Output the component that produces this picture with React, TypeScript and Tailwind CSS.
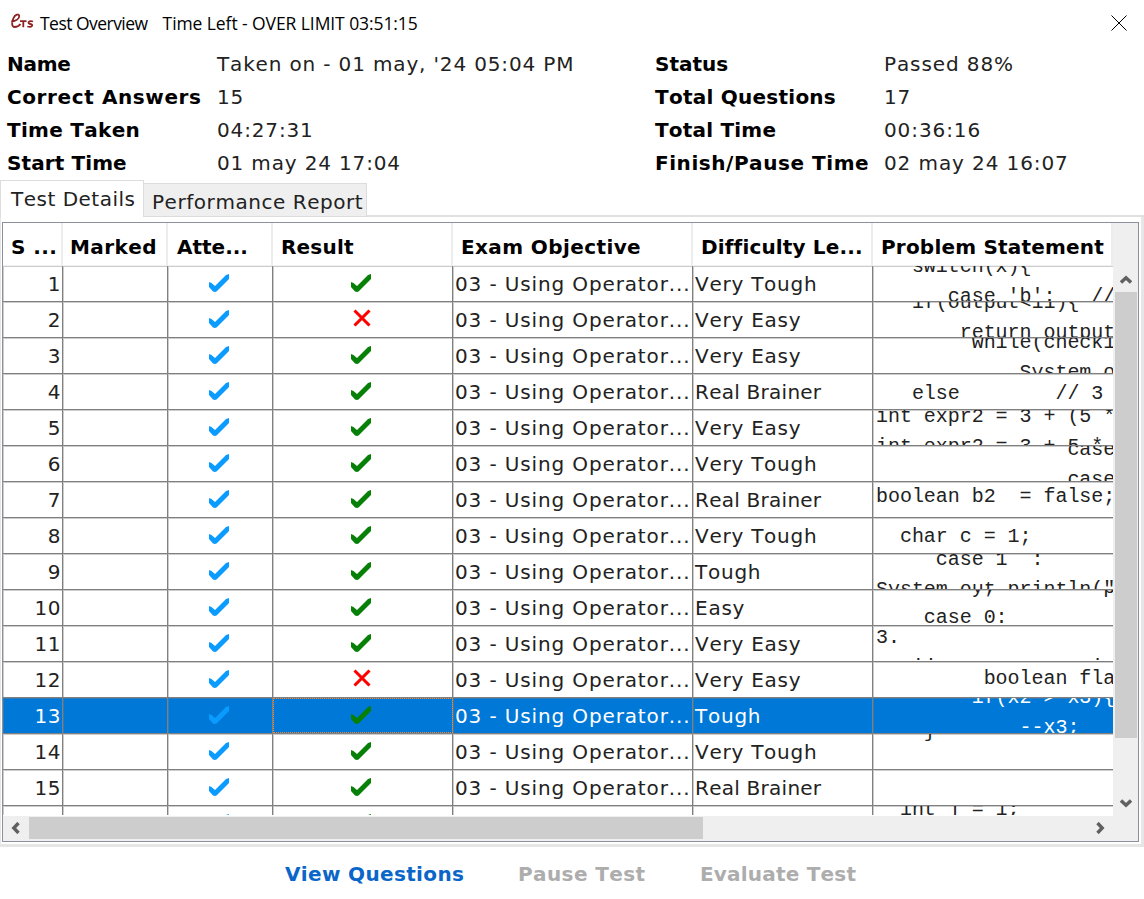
import React from "react";

type Row = { code: string; offset: string; level: string; failed?: boolean };

const rows: Row[] = [
  { level: "Very Tough", offset: "-mt-[14px]", code: "   switch(x){\n      case 'b':   //" },
  { level: "Very Easy", offset: "-mt-[14px]", code: "   if(output<11){\n       return output", failed: true },
  { level: "Very Easy", offset: "-mt-[10px]", code: "        while(check1\n            System.o" },
  { level: "Real Brainer", offset: "mt-[5px]", code: "   else        // 3" },
  { level: "Very Easy", offset: "-mt-[8px]", code: "int expr2 = 3 + (5 *\nint expr2 = 3 + 5 * " },
  { level: "Very Tough", offset: "-mt-[11px]", code: "                case\n                case" },
  { level: "Real Brainer", offset: "mt-0", code: "boolean b2  = false;" },
  { level: "Very Tough", offset: "mt-[4px]", code: "  char c = 1;" },
  { level: "Tough", offset: "-mt-[9px]", code: "     case 1  :\nSystem.out.println(\"" },
  { level: "Easy", offset: "-mt-[17px]", code: "        y;         p\n    case 0:" },
  { level: "Very Easy", offset: "-mt-[3px]", code: "3.\n   ij             i" },
  { level: "Very Easy", offset: "mt-[2px]", code: "         boolean fla", failed: true },
  { level: "Tough", offset: "-mt-[15px]", code: "        if(x2 > x3){\n            --x3;" },
  { level: "Very Tough", offset: "-mt-[17px]", code: "    }" },
  { level: "Real Brainer", offset: "mt-0", code: "" },
  { level: "", offset: "-mt-[11px]", code: "  int j = 1;" },
];

const Check = ({ className }: { className: string }) => (
  <svg width="20" height="19" viewBox="0 0 20 19" className={className}>
    <path d="M0 8 2.5 9 6 12 17 1 20 0V5L7.5 17.5 6 18 4 17.5 0 13Z" fill="currentColor" />
  </svg>
);

const Cross = () => (
  <svg width="18" height="18" viewBox="0 0 18 18" className="-ml-[2px] mt-[7px] text-[#f00]">
    <path d="M1.500 1.500 16.500 16.500M16.500 1.500 1.500 16.500" stroke="currentColor" strokeWidth="3.1" />
  </svg>
);

const Chevron = ({ turn }: { turn: string }) => (
  <svg width="12" height="10" viewBox="0 0 12 10" className={turn}>
    <path d="M1 7.5 6 2.8 11 7.5" fill="none" stroke="#606060" strokeWidth="3.4" />
  </svg>
);

const columns = "grid grid-cols-[60px_105px_105px_180px_240px_180px_240px]";

const headers = [
  { label: "S ...", pad: "pl-[8px]", track: "tracking-[0.4px]" },
  { label: "Marked", pad: "pl-[7px]", track: "tracking-[0.4px]" },
  { label: "Atte...", pad: "pl-[9px]", track: "tracking-[0px]" },
  { label: "Result", pad: "pl-[8px]", track: "tracking-[0.2px]" },
  { label: "Exam Objective", pad: "pl-[8px]", track: "tracking-[0.4px]" },
  { label: "Difficulty Le...", pad: "pl-[8px]", track: "tracking-[0.15px]" },
  { label: "Problem Statement", pad: "pl-[8px]", track: "tracking-[0.2px]" },
];

const info = [
  { label: "Name", track: "tracking-[-0.3px]", value: "Taken on - 01 may, '24 05:04 PM", label2: "Status", track2: "tracking-[0px]", value2: "Passed 88%" },
  { label: "Correct Answers", track: "tracking-[0.6px]", value: "15", label2: "Total Questions", track2: "tracking-[0.25px]", value2: "17" },
  { label: "Time Taken", track: "tracking-[0.3px]", value: "04:27:31", label2: "Total Time", track2: "tracking-[0.2px]", value2: "00:36:16" },
  { label: "Start Time", track: "tracking-[0.1px]", value: "01 may 24 17:04", label2: "Finish/Pause Time", track2: "tracking-[0.55px]", value2: "02 may 24 16:07" },
];

function TableRow({ row, index }: { row: Row; index: number }) {
  const selected = index === 12;
  const last = index === 15;
  const cell = "h-full overflow-hidden border-r border-[#808080] shadow-[inset_1px_1px_0_rgba(128,128,128,0.4)]";
  const levelTrack = row.level === "Real Brainer" ? "tracking-[0.25px]" : "tracking-[0.75px]";
  return (
    <div
      className={`${columns} shrink-0 overflow-hidden ${last ? "h-[9px]" : "h-9 border-b border-[#808080]"} ${
        selected ? "bg-[#0078d7] text-white" : "bg-white text-[#222]"
      }`}
    >
      <div className={`${cell} pr-px text-right leading-[37px] tracking-[0.5px]`}>{last ? "" : index + 1}</div>
      <div className={cell} />
      <div className={`${cell} flex justify-center`}>
        <Check className="-ml-[3px] mt-[8px] shrink-0 text-[#0a9bff]" />
      </div>
      <div
        className={`${cell} flex justify-center ${selected ? "outline outline-1 -outline-offset-1 outline-dotted outline-[#ff8728]" : ""}`}
      >
        {row.failed ? <Cross /> : <Check className="-ml-[3px] mt-[8px] shrink-0 text-[#078007]" />}
      </div>
      <div className={`${cell} whitespace-nowrap pl-[2px] leading-[37px] tracking-[0.87px]`}>
        {last ? "" : "03 - Using Operator..."}
      </div>
      <div className={`${cell} ${levelTrack} whitespace-nowrap pl-[2px] leading-[37px]`}>{row.level}</div>
      <pre className="h-full overflow-hidden pl-[3px] font-['Liberation_Mono',monospace] text-[20px] leading-[30px] tracking-[-0.04px] shadow-[inset_1px_1px_0_rgba(128,128,128,0.4)]">
        <div className={row.offset}>{row.code}</div>
      </pre>
    </div>
  );
}

export default function App() {
  return (
    <div className="flex h-[899px] w-[1144px] flex-col overflow-hidden bg-white font-['DejaVu_Sans',sans-serif] text-[20px] text-[#222] [font-kerning:none]">
      <header className="flex h-[47px] shrink-0 items-center pl-[10px] pr-[17px] font-['Open_Sans',sans-serif] text-[17.5px] text-black [font-kerning:normal]">
        <svg width="24" height="18" viewBox="0 0 24 18" className="-mt-[3px] shrink-0" fill="none" stroke="#8f2020" strokeWidth="1.8">
          <path d="M1.200 8.500C6 7.800 9.500 5.500 9.200 2.800 8.800.6 5 1.200 3.300 5.500 1.300 10.500 2 14 4.500 14 6.500 14 9 13 10.500 11" />
          <path d="M10 8.200H16.500M13.300 8.200V14.200M23 8.500C18.500 7 17 10.500 20.300 11 24 11.600 22 15 17.300 13.500" />
        </svg>
        <span className="ml-[6px] tracking-[-0.53px]">Test Overview</span>
        <span className="ml-[15px] tracking-[-0.08px]">Time Left - OVER LIMIT 03:51:15</span>
        <svg width="16" height="16" viewBox="0 0 16 16" className="-mt-[2px] ml-auto" stroke="#000" strokeWidth="1">
          <path d="M.5.5 15.500 15.500M15.500.5.5 15.500" />
        </svg>
      </header>

      <section className="flex h-[133px] shrink-0 flex-col pl-[7px]">
        {info.map((r) => (
          <div key={r.label} className="grid h-[33px] shrink-0 grid-cols-[210px_438px_229px_auto] whitespace-nowrap leading-[34px]">
            <b className={`${r.track} text-black`}>{r.label}</b>
            <span className="tracking-[0.85px]">{r.value}</span>
            <b className={`${r.track2} text-black`}>{r.label2}</b>
            <span className="tracking-[0.9px]">{r.value2}</span>
          </div>
        ))}
      </section>

      <nav className="flex h-[37px] shrink-0 items-end">
        <div className="h-[37px] w-[144px] whitespace-nowrap border-l border-r border-t border-[#dcdcdc] pl-[10px] leading-[37px] tracking-[0.5px]">Test Details</div>
        <div className="h-[34px] w-[223px] whitespace-nowrap border-y border-r border-[#dcdcdc] bg-[#efefef] pl-[8px] leading-[37px] tracking-[0.55px]">
          Performance Report
        </div>
        <div className="h-[2px] flex-1 bg-[#e0e0e0]" />
      </nav>

      <div className="h-[630px] shrink-0 border-b-[3px] border-l border-r-[3px] border-[#e6e6e6] pl-px pr-px pt-[5px]">
        <main className="flex h-[620px] w-[1137px] flex-col border border-[#8b919c]">
          <div className="flex h-[593px]">
            <div className="flex w-[1110px] flex-col overflow-hidden">
              <div className={`${columns} h-[43px] shrink-0 border-b border-[#f0f0f0]`}>
                {headers.map((h) => (
                  <b key={h.label} className={`${h.pad} ${h.track} overflow-hidden whitespace-nowrap border-r-2 border-[#ececec] leading-[49px] text-black`}>
                    {h.label}
                  </b>
                ))}
              </div>
              {rows.map((row, i) => (
                <TableRow key={i} row={row} index={i} />
              ))}
            </div>
            <div className="flex flex-1 flex-col items-center bg-[#efefef]">
              <div className="flex h-[69px] items-end pb-[7px]">
                <Chevron turn="" />
              </div>
              <div className="h-[446px] w-[22px] bg-[#cdcdcd]" />
              <div className="flex flex-1 items-end pb-[8px]">
                <Chevron turn="rotate-180" />
              </div>
            </div>
          </div>
          <div className="flex flex-1 items-center bg-[#efefef] pb-px">
            <div className="flex w-[26px] justify-center">
              <Chevron turn="-rotate-90" />
            </div>
            <div className="h-[22px] w-[674px] bg-[#cdcdcd]" />
            <div className="ml-auto mr-[32px]">
              <Chevron turn="rotate-90" />
            </div>
          </div>
        </main>
      </div>

      <footer className="flex flex-1 whitespace-nowrap pl-[285px] pt-[13px] font-bold leading-[28px]">
        <button className="h-7 w-[233px] text-left tracking-[0.35px] text-[#0a66c8]">View Questions</button>
        <button className="h-7 w-[182px] text-left tracking-[0.4px] text-[#adadad]">Pause Test</button>
        <button className="h-7 text-left tracking-[0.2px] text-[#adadad]">Evaluate Test</button>
      </footer>
    </div>
  );
}
